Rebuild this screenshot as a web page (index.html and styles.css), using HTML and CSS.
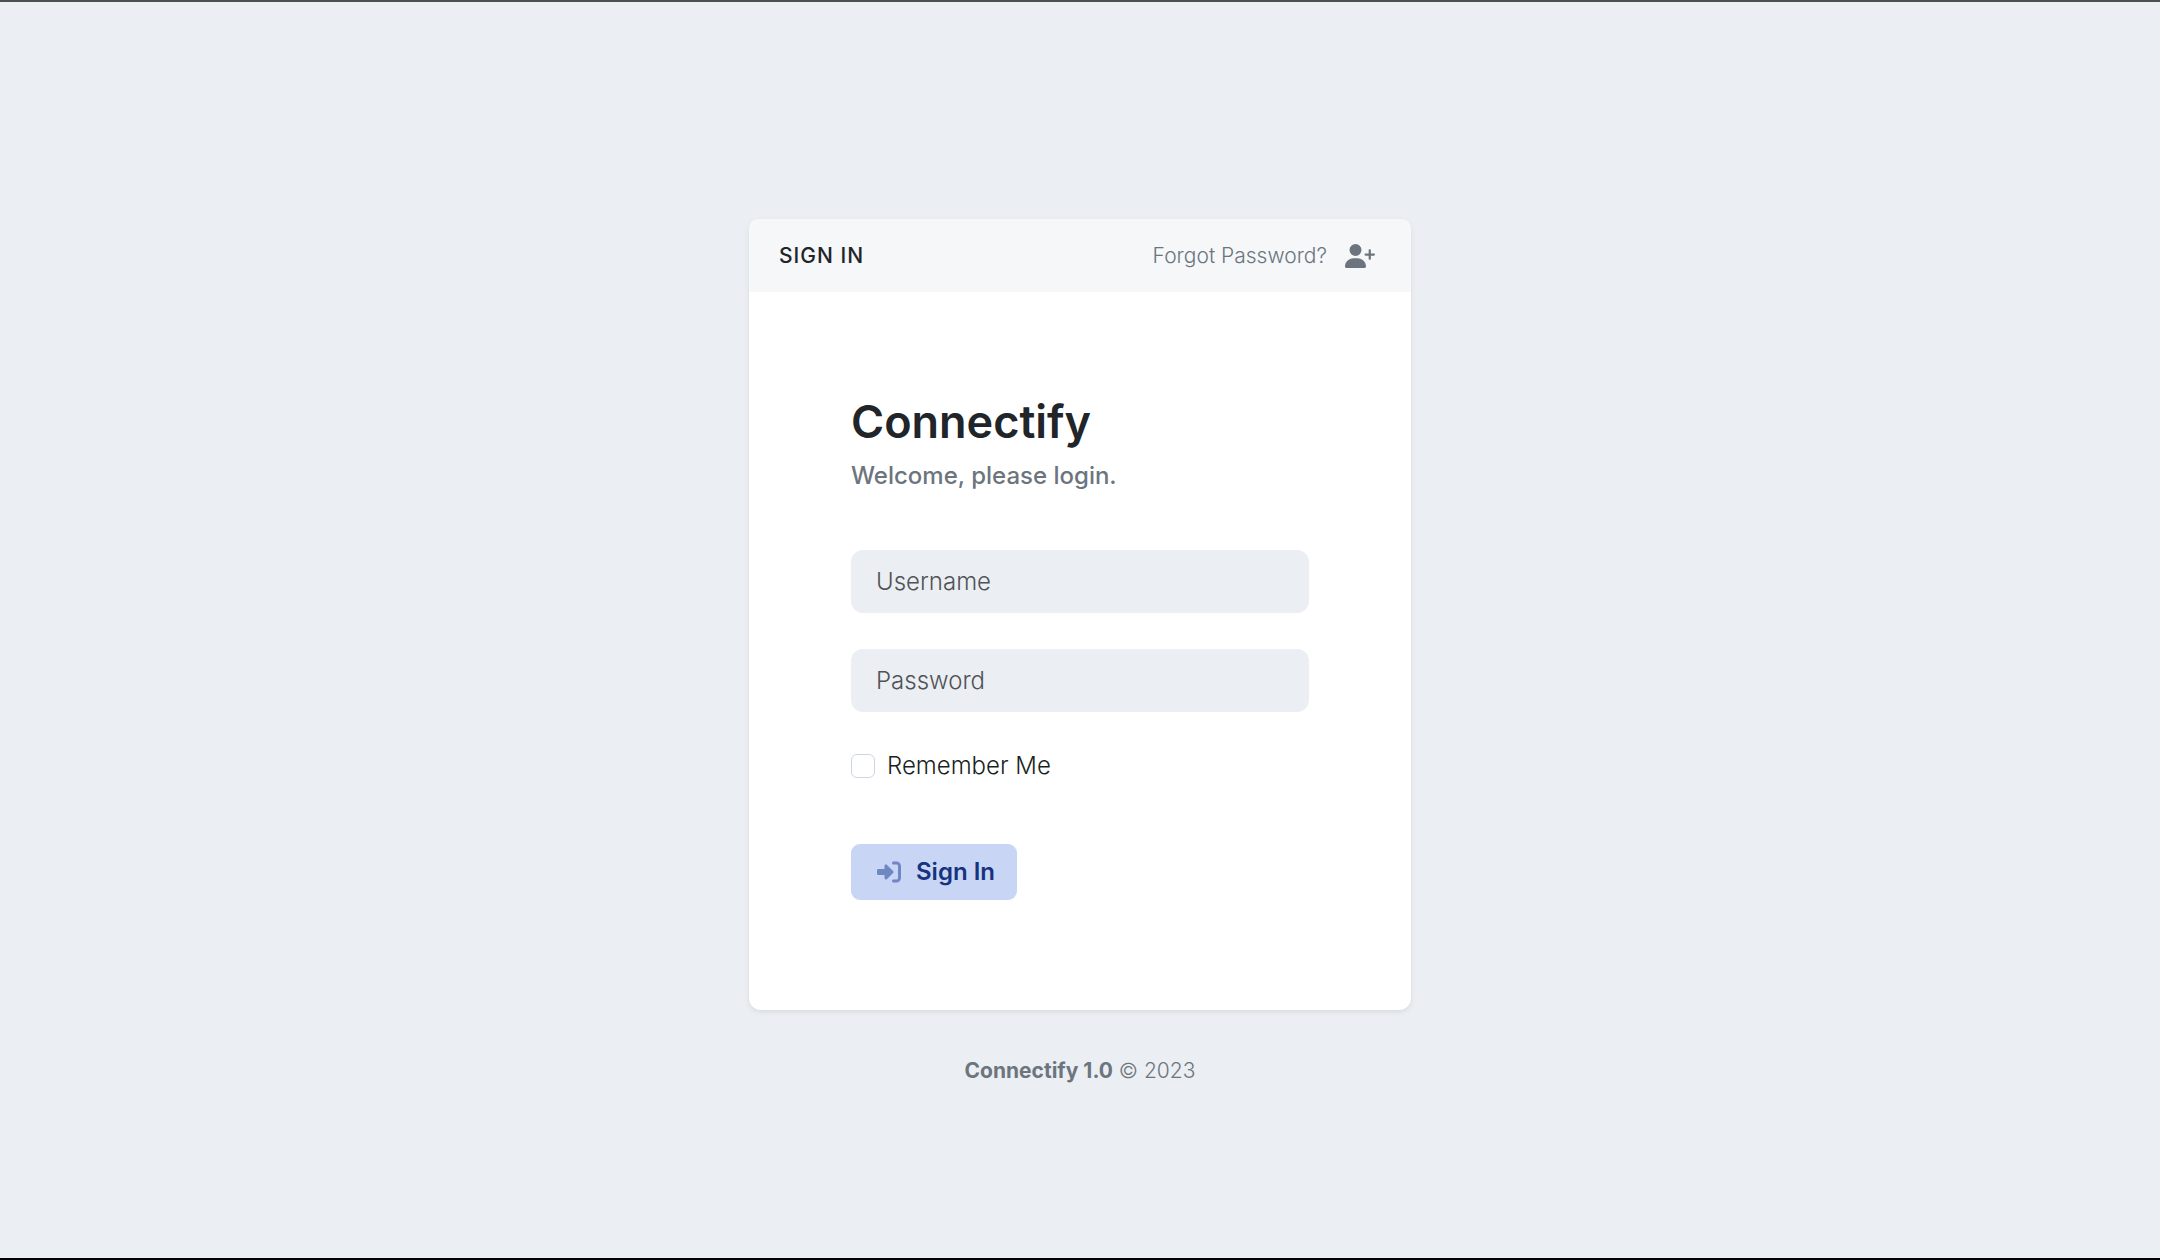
FILE: index.html
```html
<!DOCTYPE html>
<html lang="en">
<head>
<meta charset="utf-8">
<meta name="viewport" content="width=device-width, initial-scale=1">
<title>Connectify - Sign In</title>
<link rel="stylesheet" href="styles.css">
</head>
<body>
<main class="page">
  <section class="card">
    <header class="card-header">
      <h3 class="card-title">Sign In</h3>
      <nav class="card-options">
        <a class="option" href="#forgot">Forgot Password?</a>
        <a class="option" href="#register" aria-label="New Account">
          <svg class="icon-user" viewBox="0 0 640 512" aria-hidden="true"><path d="M96 128a128 128 0 1 1 256 0A128 128 0 1 1 96 128zM0 482.300C0 383.800 79.800 304 178.300 304h91.400C368.200 304 448 383.800 448 482.300c0 16.400-13.300 29.700-29.700 29.700H29.700C13.300 512 0 498.700 0 482.300zM504 312V248H440c-13.300 0-24-10.700-24-24s10.700-24 24-24h64V136c0-13.300 10.700-24 24-24s24 10.700 24 24v64h64c13.300 0 24 10.700 24 24s-10.700 24-24 24H552v64c0 13.300-10.700 24-24 24s-24-10.700-24-24z"/></svg>
        </a>
      </nav>
    </header>
    <div class="card-content">
      <h1 class="brand">Connectify</h1>
      <p class="welcome">Welcome, please login.</p>
      <form class="form">
        <input class="field" type="text" name="username" placeholder="Username" aria-label="Username">
        <input class="field" type="password" name="password" placeholder="Password" aria-label="Password">
        <div class="check">
          <input class="check-box" type="checkbox" id="remember">
          <label for="remember">Remember Me</label>
        </div>
        <button class="submit" type="submit">
          <svg class="icon-sign" viewBox="0 0 512 512" aria-hidden="true"><path d="M352 96h64c17.700 0 32 14.300 32 32v256c0 17.700-14.300 32-32 32h-64c-17.700 0-32 14.300-32 32s14.300 32 32 32h64c53 0 96-43 96-96V128c0-53-43-96-96-96h-64c-17.700 0-32 14.300-32 32s14.300 32 32 32zM342.600 233.400l-128-128c-9.200-9.200-22.900-11.900-34.900-6.900S160 115.100 160 128v64H32c-17.700 0-32 14.300-32 32v64c0 17.700 14.300 32 32 32h128v64c0 12.900 7.800 24.600 19.800 29.600s25.700 2.200 34.900-6.900l128-128c12.500-12.500 12.500-32.800 0-45.300z"/></svg>
          Sign In
        </button>
      </form>
    </div>
  </section>
  <footer class="footer"><strong>Connectify 1.0</strong> © 2023</footer>
</main>
</body>
</html>
```
FILE: styles.css
```css
*, *::before, *::after {
  box-sizing: border-box;
}

body {
  margin: 0;
  background: #ebeef2;
  color: #212529;
  font-family: Inter, "Liberation Sans", sans-serif;
  font-size: 24px;
  line-height: 36px;
  font-weight: 300;
}

h1, h3, p {
  margin: 0;
}

.page {
  min-height: 100vh;
  padding: 217px 24px 160px;
  border-top: 2px solid #4f4f4f;
  border-bottom: 2px solid #000;
  display: flex;
  flex-direction: column;
  align-items: center;
}

.card {
  width: 100%;
  max-width: 662px;
  background: #fff;
  border-radius: 12px;
  box-shadow: 0 2px 4px rgba(210, 216, 222, 0.8);
}

.card-header {
  display: flex;
  align-items: center;
  justify-content: space-between;
  padding: 19px 36px 18px 30px;
  background: #f5f7f9;
  border-radius: 9px 9px 0 0;
}

.card-title {
  font-size: 21px;
  font-weight: 500;
  letter-spacing: 1px;
  text-transform: uppercase;
}

.card-options {
  display: flex;
  align-items: center;
  gap: 18px;
}

.option {
  color: #6c757d;
  font-size: 21px;
  text-decoration: none;
}

.icon-user {
  display: block;
  width: 30px;
  height: 24px;
  fill: currentColor;
}

.card-content {
  padding: 102px 102px 110px;
}

.brand {
  font-size: 45px;
  line-height: 56px;
  font-weight: 600;
}

.welcome {
  margin-top: 8px;
  color: #6c757d;
  font-weight: 500;
}

.form {
  display: flex;
  flex-direction: column;
  align-items: flex-start;
  gap: 36px;
  margin-top: 56px;
}

.field {
  width: 100%;
  height: 63px;
  padding: 0 25px;
  border: 0;
  border-radius: 12px;
  background: #ebeef2;
  color: #212529;
  font: inherit;
}

.field::placeholder {
  color: #505356;
  opacity: 1;
}

.check {
  display: flex;
  align-items: center;
  gap: 12px;
  color: #1b1f23;
}

.check-box {
  appearance: none;
  width: 24px;
  height: 24px;
  margin: 0;
  border: 1px solid #cfd6e1;
  border-radius: 6px;
  background: #fff;
}

.check-box:checked {
  background: #7b9ae8;
}

.submit {
  display: flex;
  align-items: center;
  gap: 15px;
  height: 56px;
  margin-top: 24px;
  padding: 0 22px 0 26px;
  border: 0;
  border-radius: 9px;
  background: #c8d5f5;
  color: #16337f;
  font: inherit;
  font-weight: 600;
}

.icon-sign {
  width: 24px;
  height: 24px;
  fill: #6f87c2;
}

.footer {
  margin-top: 45px;
  color: #6c757d;
  font-size: 21px;
  line-height: 32px;
}

.footer strong {
  font-weight: 700;
}
```
